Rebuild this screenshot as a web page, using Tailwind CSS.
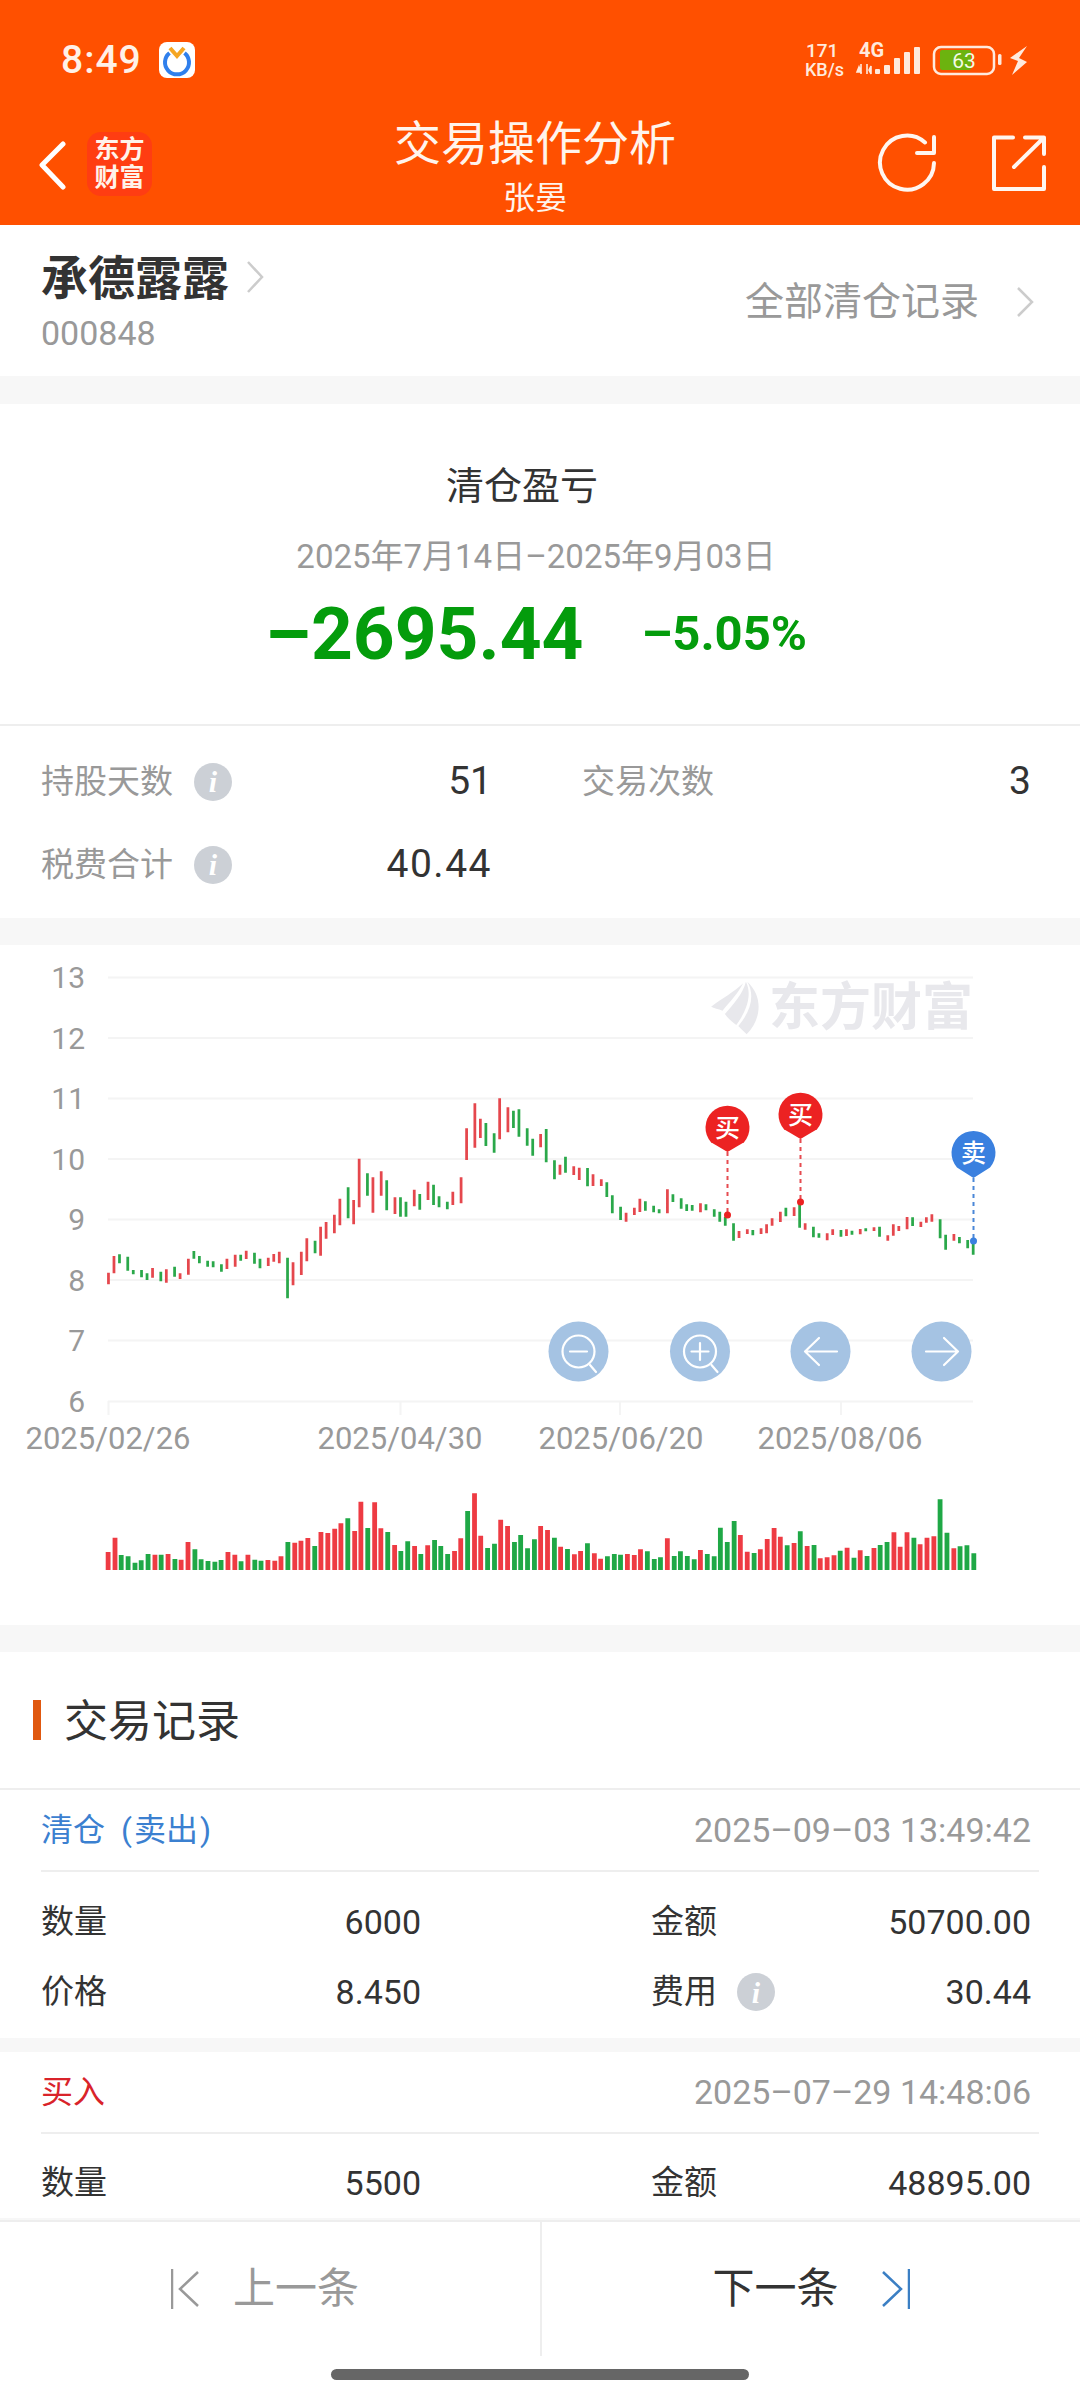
<!DOCTYPE html>
<html lang="zh-CN">
<head>
<meta charset="utf-8">
<script src="https://cdn.jsdelivr.net/npm/@tailwindcss/browser@4"></script>
</head>
<body class="m-0 bg-white">
<div class="w-[1080px] h-[2400px] flex flex-col overflow-hidden bg-white text-[#333] font-['Roboto','Noto_Sans_CJK_SC',sans-serif]">

  <!-- orange header -->
  <header class="h-[225px] shrink-0 bg-[#ff5000] text-white flex flex-col">
    <div class="h-[120px] flex items-center justify-between pl-[61px] pr-[50px]">
      <div class="flex items-center gap-[17px]">
        <span class="text-[39px] leading-none font-medium tracking-[1px] text-[#fff1e8]">8:49</span>
        <svg width="36" height="36" viewBox="0 0 36 36" class="block">
          <rect width="36" height="36" rx="8" fill="#fff"/>
          <path d="M10.5 11A12 12 0 1 0 25.5 11" fill="none" stroke="#2f7fec" stroke-width="4"/>
          <path d="M11 6l7 8 7-8" fill="none" stroke="#f5a623" stroke-width="4"/>
        </svg>
      </div>
      <svg width="230" height="40" viewBox="800 40 230 40" class="block" font-family="Roboto">
        <text x="806" y="57" font-size="19" font-weight="500" fill="#ffeadd">171</text>
        <text x="805" y="76" font-size="18" font-weight="500" fill="#ffeadd">KB/s</text>
        <text x="859" y="57" font-size="20" font-weight="700" fill="#ffeadd">4G</text>
        <path d="M861 64v10M859 67l-2 5h4zM867 64v10M869 70l2-4v8z" fill="#ffeadd" stroke="#ffeadd" stroke-width="1.6"/>
        <g fill="#ffeadd">
          <rect x="875" y="69" width="5" height="5" rx="1"/>
          <rect x="884" y="65" width="6" height="9" rx="1"/>
          <rect x="894" y="58" width="6" height="16" rx="1"/>
          <rect x="904" y="52" width="6" height="22" rx="1"/>
          <rect x="914" y="47" width="6" height="27" rx="1"/>
        </g>
        <rect x="934" y="47" width="60" height="27" rx="7" fill="none" stroke="#ffeadd" stroke-width="2.5"/>
        <rect x="940" y="50" width="31" height="20" rx="2" fill="#6cb30f"/>
        <text x="964" y="68" font-size="21" text-anchor="middle" fill="#f4fbe6">63</text>
        <rect x="998" y="54" width="3.5" height="11" rx="1.5" fill="#ffeadd"/>
        <path d="M1027 46L1010 58L1018 61L1012 75L1027 62L1019 58L1027 46Z" fill="#ffeadd"/>
      </svg>
    </div>
    <div class="h-[105px] grid grid-cols-[396px_278px_1fr]">
      <div class="flex items-start">
        <svg width="30" height="50" viewBox="38 140 30 50" class="block ml-[38px] mt-[20px]">
          <path d="M63 144L42 165L63 187" fill="none" stroke="#fff" stroke-width="5" stroke-linecap="round" stroke-linejoin="round"/>
        </svg>
        <div class="ml-[19px] mt-[12px] w-[65px] h-[64px] rounded-[14px] bg-[#ff3d12] flex flex-col items-center justify-center text-[25px] leading-[28px] font-bold text-[#fff3ea]">
          <span>东方</span><span>财富</span>
        </div>
      </div>
      <div class="flex flex-col items-center">
        <div class="text-[47px] leading-[48px] font-normal whitespace-nowrap text-[#fff4ec]">交易操作分析</div>
        <div class="text-[32px] leading-[36px] mt-[12px] text-[#fff4ec]">张晏</div>
      </div>
      <div class="flex items-start justify-end">
        <svg width="170" height="70" viewBox="875 130 170 70" class="block mr-[34px] mt-[9px]" fill="none" stroke="#fff6f0" stroke-width="4" stroke-linecap="round" stroke-linejoin="round">
          <path d="M924 143.5A27 27 0 1 0 933 164"/>
          <path d="M933 138V154H916"/>
          <path d="M1012 138.500H993V190H1043V168"/>
          <path d="M1013 168L1042 139.500M1024 138.500H1043V155"/>
        </svg>
      </div>
    </div>
  </header>

  <!-- scrolling body -->
  <main class="flex-1 min-h-0 overflow-hidden bg-[#f7f7f7]">
    <section class="h-[151px] bg-white flex justify-between">
      <div class="pl-[41px] pt-[26px]">
        <div class="flex items-start">
          <span class="text-[47px] leading-[56px] font-bold">承德露露</span>
          <svg width="18" height="32" viewBox="0 0 18 32" class="block ml-[17px] mt-[10px]"><path d="M2 1l14 15L2 31" fill="none" stroke="#ccc" stroke-width="2.500"/></svg>
        </div>
        <div class="text-[34px] leading-[40px] mt-[6px] text-[#999]">000848</div>
      </div>
      <div class="flex items-center pr-[46px] pt-[3px]">
        <span class="text-[39px] text-[#999] leading-[46px]">全部清仓记录</span>
        <svg width="18" height="30" viewBox="0 0 18 30" class="block ml-[37px]"><path d="M2 1l14 14L2 29" fill="none" stroke="#ccc" stroke-width="2.500"/></svg>
      </div>
    </section>

    <section class="mt-[28px] h-[514px] bg-white">
      <div class="h-[322px] border-b-2 border-[#eee] flex flex-col items-center pt-[59px] pr-[8px]">
        <div class="text-[38px] leading-[46px] mr-[28px]">清仓盈亏</div>
        <div class="text-[33px] leading-[40px] mt-[28px] text-[#999]">2025年7月14日–2025年9月03日</div>
        <div class="flex items-center gap-[58px] mt-[17px] text-[#049c0c] font-bold leading-[80px]">
          <span class="text-[73px]">–2695.44</span>
          <span class="text-[49px]">–5.05%</span>
        </div>
      </div>
      <div class="grid grid-cols-[451px_1fr] gap-x-[90px] pl-[41px] pr-[49px] pt-[14px] auto-rows-[83px] items-center">
        <div class="flex items-center justify-between">
          <div class="flex items-center gap-[21px]"><span class="text-[33px] text-[#999]">持股天数</span>
            <span class="w-[38px] h-[38px] rounded-full bg-[#ccd0d6] text-white flex items-center justify-center text-[30px] italic font-bold font-['Liberation_Serif',serif]">i</span></div>
          <span class="text-[39px] leading-none">51</span>
        </div>
        <div class="flex items-center justify-between">
          <span class="text-[33px] text-[#999]">交易次数</span>
          <span class="text-[39px] leading-none">3</span>
        </div>
        <div class="flex items-center justify-between">
          <div class="flex items-center gap-[21px]"><span class="text-[33px] text-[#999]">税费合计</span>
            <span class="w-[38px] h-[38px] rounded-full bg-[#ccd0d6] text-white flex items-center justify-center text-[30px] italic font-bold font-['Liberation_Serif',serif]">i</span></div>
          <span class="text-[39px] leading-none tracking-[1.5px]">40.44</span>
        </div>
      </div>
    </section>

    <!-- chart -->
    <section class="mt-[27px] h-[680px] bg-white">
      <svg width="1080" height="680" viewBox="0 945 1080 680" class="block" font-family="Roboto, 'Noto Sans CJK SC', sans-serif">
        <g stroke="#f4f4f4" stroke-width="2" fill="none">
          <path d="M108 977.500H973M108 1038H973M108 1098.500H973M108 1159H973M108 1219.500H973M108 1280H973M108 1340.500H973M108 1401.500H973"/>
          <path d="M108.500 1401V1415M400.500 1401V1415M620 1401V1415M841 1401V1415"/>
        </g>
        <g font-size="30" fill="#999" text-anchor="end">
          <text x="85" y="988">13</text><text x="85" y="1048.500">12</text><text x="85" y="1109">11</text><text x="85" y="1169.500">10</text>
          <text x="85" y="1230">9</text><text x="85" y="1290.500">8</text><text x="85" y="1351">7</text><text x="85" y="1412">6</text>
        </g>
        <g font-size="31" fill="#999" text-anchor="middle">
          <text x="108" y="1449">2025/02/26</text><text x="400" y="1449">2025/04/30</text><text x="621" y="1449">2025/06/20</text><text x="840" y="1449">2025/08/06</text>
        </g>

        <!-- watermark -->
        <g transform="translate(540 940) scale(.34435 .33333)" fill="#e8e8ec">
          <path d="M497 200C530 175 565 155 590 130C572 165 548 190 530 212C518 206 505 205 497 200Z"/>
          <path d="M537 222C562 192 590 160 598 125C620 170 592 225 570 255C556 243 545 235 537 222Z"/>
          <path d="M602 125C650 170 642 240 600 283C590 272 582 265 576 258C612 215 625 165 602 125Z"/>
        </g>
        <text x="769" y="1025" font-size="51" font-weight="700" fill="#e8e8ec">东方财富</text>

        <!-- candles -->
        <g transform="translate(0 940) scale(.34435 .33333)" fill="none" stroke-width="8">
          <path stroke="#e5474d" d="M315 998V1033M331 948V1000M443 984V1013M483 988V1028M523 1000V1017M547 956V1004M659 956V987M683 944V980M715 932V957M779 953V978M795 942V965M811 935V970M851 967V1036M875 935V1005M891 895V964M931 860V947M947 846V896M971 824V880M987 776V856M1027 780V853M1043 656V802M1083 712V818M1107 694V767M1147 772V822M1203 749V799M1243 725V780M1315 755V795M1339 712V790M1355 565V660M1379 490V623M1395 536V594M1451 475V598M1475 502V577M1570 582V622"/>
          <path stroke="#2aa84a" d="M347 943V970M371 950V992M387 990V1003M411 990V1012M427 1000V1020M467 995V1024M507 980V1010M563 933V956M579 948V970M603 962V980M619 964V982M643 973V995M699 944V962M739 938V971M755 956V985M835 953V1075M915 902V940M1011 742V835M1067 700V767M1123 721V811M1163 772V830M1179 785V830M1219 762V809M1259 734V795M1275 769V802M1299 785V808M1435 580V638M1411 549V618M1491 512V564M1507 508V590M1531 565V617M1547 596V647"/>
        </g>
        <g transform="translate(540 940) scale(.34435 .33333)" fill="none" stroke-width="8">
          <path stroke="#e5474d" d="M58 674V704M98 679V705M114 683V720M154 703V738M178 718V738M250 818V845M274 803V825M290 776V816M370 748V820M466 790V817M578 873V894M602 868V882M642 865V882M658 853V880M674 835V857M698 815V846M738 802V828M770 850V869M834 880V901M850 868V885M890 868V888M930 867V883M970 862V873M1010 886V902M1026 853V887M1042 858V873M1066 831V868M1106 845V861M1122 832V848M1138 823V845M1202 882V902"/>
          <path stroke="#2aa84a" d="M18 567V667M42 661V718M74 650V698M138 684V739M194 727V771M210 766V820M234 800V840M306 784V812M330 797V817M346 808V820M386 763V786M410 775V806M426 793V813M442 795V812M482 793V811M506 808V830M522 815V845M538 830V857M562 850V902M618 870V886M714 803V829M754 795V863M794 860V892M810 880V893M874 870V890M906 872V884M946 865V874M986 860V890M1082 832V858M1162 838V895M1178 884V929M1218 891V910M1242 900V925M1258 910V944"/>
        </g>

        <!-- trade markers -->
        <g fill="none" stroke-width="2" stroke-dasharray="4 4">
          <path stroke="#e64b50" d="M727.500 1152V1215M800.500 1139V1202"/>
          <path stroke="#4a87d8" d="M973.500 1178V1241"/>
        </g>
        <circle cx="727.500" cy="1215" r="3.500" fill="#ec2222"/>
        <circle cx="800.500" cy="1202" r="3.500" fill="#ec2222"/>
        <circle cx="973.500" cy="1241" r="3.500" fill="#3a80df"/>
        <path d="M727.500 1152L711 1142.200A22 22 0 1 1 744 1142.200Z" fill="#ec2222"/>
        <path d="M800.500 1139L784 1129.200A22 22 0 1 1 817 1129.200Z" fill="#ec2222"/>
        <path d="M973.500 1178L957 1167.500A22 22 0 1 1 990 1167.500Z" fill="#3a80df"/>
        <g font-size="25" font-weight="500" fill="#fff" text-anchor="middle">
          <text x="727.500" y="1137">买</text>
          <text x="800.500" y="1124">买</text>
          <text x="973.500" y="1162">卖</text>
        </g>

        <!-- zoom / pan buttons -->
        <g fill="#a5c3e3">
          <circle cx="578.500" cy="1351.500" r="30"/><circle cx="700" cy="1351.500" r="30"/><circle cx="820.500" cy="1351.500" r="30"/><circle cx="941.500" cy="1351.500" r="30"/>
        </g>
        <g fill="none" stroke="#fff" stroke-width="2.200" stroke-linecap="round" stroke-linejoin="round">
          <circle cx="578.500" cy="1351.500" r="16"/><path d="M570 1351.500H587M590 1365L596 1372"/>
          <circle cx="700" cy="1351.500" r="16"/><path d="M691.500 1351.500H708.500M700 1343V1360M711.500 1365L717.500 1372"/>
          <path d="M837 1351.500H805M819 1338L805 1351.500L819 1365"/>
          <path d="M926 1351.500H958M944 1338L958 1351.500L944 1365"/>
        </g>

        <!-- volume -->
        <g transform="translate(0 1440) scale(.6887 .33333)" fill="none" stroke-width="7">
          <path stroke="#ee3b43" d="M157 336V390M167 293V390M225 344V390M244 342V390M263 359V390M273 306V390M331 336V390M341 344V390M360 344V390M389 360V390M399 362V390M408 349V390M428 308V390M437 302V390M447 294V390M466 276V390M476 279V390M486 266V390M495 250V390M515 273V390M524 185V390M544 187V390M553 265V390M573 315V390M602 318V390M621 316V390M660 333V390M669 295V390M689 160V390M698 287V390M727 239V390M737 258V390M785 258V390M795 270V390M814 320V390M834 343V390M843 333V390M863 340V390M872 356V390M911 342V390M921 345V390M930 328V390M969 295V390M1017 330V390M1075 285V390M1085 335V390M1104 328V390M1114 297V390M1124 264V390M1133 290V390M1153 309V390M1172 318V390M1191 355V390M1201 352V390M1211 346V390M1230 323V390M1249 331V390M1269 324V390M1298 277V390M1307 320V390M1317 277V390M1336 313V390M1346 293V390M1356 289V390M1385 325V390"/>
          <path stroke="#1fa846" d="M176 345V390M186 349V390M196 368V390M205 361V390M215 342V390M234 344V390M254 357V390M283 328V390M292 358V390M302 363V390M312 365V390M321 360V390M350 364V390M370 359V390M379 362V390M418 306V390M457 318V390M505 235V390M534 264V390M563 276V390M582 333V390M592 304V390M611 342V390M631 300V390M640 318V390M650 342V390M679 213V390M708 324V390M718 311V390M747 306V390M756 285V390M766 325V390M776 298V390M805 293V390M824 327V390M853 310V390M882 349V390M892 342V390M901 344V390M940 334V390M950 357V390M959 352V390M979 348V390M988 334V390M998 348V390M1008 358V390M1027 342V390M1037 349V390M1046 263V390M1056 306V390M1066 243V390M1095 339V390M1143 316V390M1162 274V390M1182 315V390M1220 332V390M1240 353V390M1259 348V390M1278 315V390M1288 306V390M1327 293V390M1365 178V390M1375 278V390M1394 319V390M1404 316V390M1414 340V390"/>
        </g>
      </svg>
    </section>

    <!-- trade records -->
    <section class="mt-[27px] bg-white">
      <div class="h-[138px] border-b-2 border-[#eee] pl-[33px] pt-[48px] flex items-start">
        <span class="block w-[8px] h-[40px] bg-[#e0580f]"></span>
        <span class="ml-[23px] text-[44px] leading-[44px]">交易记录</span>
      </div>
      <div class="h-[248px]">
        <div class="mx-[41px] h-[82px] border-b-2 border-[#eee] flex items-center justify-between pr-[8px]">
          <span class="text-[32px] text-[#3b80d0] [word-spacing:8px]">清仓 (<span class="mx-[2px]">卖出</span>)</span>
          <span class="text-[34px] text-[#999]">2025–09–03 13:49:42</span>
        </div>
        <div class="grid grid-cols-[380px_1fr] gap-x-[230px] ml-[41px] mr-[49px] mt-[15px] auto-rows-[70px] items-center text-[34px]">
          <div class="flex justify-between items-center"><span class="text-[33px]">数量</span><span>6000</span></div>
          <div class="flex justify-between items-center"><span class="text-[33px]">金额</span><span>50700.00</span></div>
          <div class="flex justify-between items-center"><span class="text-[33px]">价格</span><span>8.450</span></div>
          <div class="flex justify-between items-center"><div class="flex items-center gap-[20px]"><span class="text-[33px]">费用</span><span class="w-[38px] h-[38px] rounded-full bg-[#ccd0d6] text-white flex items-center justify-center text-[30px] italic font-bold font-['Liberation_Serif',serif]">i</span></div><span>30.44</span></div>
        </div>
      </div>
      <div class="h-[14px] bg-[#f7f7f7]"></div>
      <div>
        <div class="mx-[41px] h-[82px] border-b-2 border-[#eee] flex items-center justify-between pr-[8px]">
          <span class="text-[32px] text-[#d9232a]">买入</span>
          <span class="text-[34px] text-[#999]">2025–07–29 14:48:06</span>
        </div>
        <div class="grid grid-cols-[380px_1fr] gap-x-[230px] ml-[41px] mr-[49px] mt-[14px] auto-rows-[70px] items-center text-[34px]">
          <div class="flex justify-between items-center"><span class="text-[33px]">数量</span><span>5500</span></div>
          <div class="flex justify-between items-center"><span class="text-[33px]">金额</span><span>48895.00</span></div>
        </div>
      </div>
    </section>
  </main>

  <!-- bottom pager -->
  <footer class="h-[136px] shrink-0 border-t-2 border-[#eee] bg-white grid grid-cols-[540px_1fr]">
    <div class="flex items-center justify-center gap-[34px] pr-[10px] text-[#999]">
      <svg width="28" height="40" viewBox="0 0 28 40" class="block"><path d="M1 0V40M27 3L9 20L27 37" fill="none" stroke="#999" stroke-width="2.500"/></svg>
      <span class="text-[42px] leading-none">上一条</span>
    </div>
    <div class="border-l-2 border-[#eee] flex items-center justify-center gap-[43px] text-[#333]">
      <span class="text-[42px] leading-none">下一条</span>
      <svg width="28" height="40" viewBox="0 0 28 40" class="block"><path d="M27 0V40M1 3L19 20L1 37" fill="none" stroke="#3b7fc4" stroke-width="2.500"/></svg>
    </div>
  </footer>
  <div class="h-[44px] shrink-0 bg-white flex justify-center pt-[13px]">
    <div class="w-[418px] h-[11px] rounded-full bg-[#666]"></div>
  </div>
</div>
</body>
</html>
